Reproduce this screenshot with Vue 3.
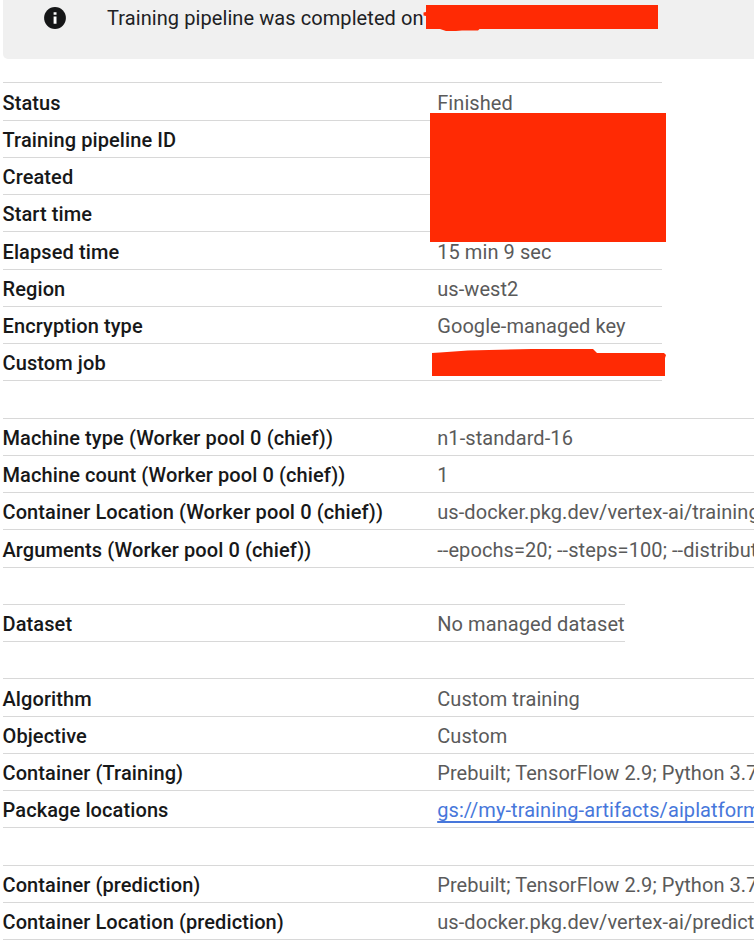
<script setup>
const groups = [
  {
    width: 'medium',
    rows: [
      { label: 'Status', value: 'Finished' },
      { label: 'Training pipeline ID', value: '', block: true },
      { label: 'Created', value: '' },
      { label: 'Start time', value: '' },
      { label: 'Elapsed time', value: '15 min 9 sec' },
      { label: 'Region', value: 'us-west2' },
      { label: 'Encryption type', value: 'Google-managed key' },
      { label: 'Custom job', value: '', strip: true },
    ],
  },
  {
    width: 'full',
    rows: [
      { label: 'Machine type (Worker pool 0 (chief))', value: 'n1-standard-16' },
      { label: 'Machine count (Worker pool 0 (chief))', value: '1' },
      { label: 'Container Location (Worker pool 0 (chief))', value: 'us-docker.pkg.dev/vertex-ai/training' },
      { label: 'Arguments (Worker pool 0 (chief))', value: '--epochs=20; --steps=100; --distribut' },
    ],
  },
  {
    width: 'narrow',
    rows: [{ label: 'Dataset', value: 'No managed dataset' }],
  },
  {
    width: 'full',
    rows: [
      { label: 'Algorithm', value: 'Custom training' },
      { label: 'Objective', value: 'Custom' },
      { label: 'Container (Training)', value: 'Prebuilt; TensorFlow 2.9; Python 3.7' },
      { label: 'Package locations', value: 'gs://my-training-artifacts/aiplatform', link: true },
    ],
  },
  {
    width: 'full',
    rows: [
      { label: 'Container (prediction)', value: 'Prebuilt; TensorFlow 2.9; Python 3.7' },
      { label: 'Container Location (prediction)', value: 'us-docker.pkg.dev/vertex-ai/predict' },
    ],
  },
]
</script>

<template>
  <main class="page">
    <header class="banner">
      <svg class="info" viewBox="0 0 22 22" aria-hidden="true">
        <circle cx="11" cy="11" r="10.9" fill="#151617" />
        <path d="M9.6 5.3h2.9v2.5H9.6zM9.6 9.5h2.9v7.3H9.6z" fill="#fff" />
      </svg>
      <span class="message">Training pipeline was completed on</span>
      <svg class="mask-banner" viewBox="0 0 236 27" aria-hidden="true">
        <path d="M4 0H236V24H57.500L56 25.500H40L34 26H24L18 24H4V11L1.500 10.500V7.500L4 7Z" />
      </svg>
    </header>

    <section v-for="(group, g) in groups" :key="g" class="group" :class="group.width">
      <div v-for="row in group.rows" :key="row.label" class="row">
        <span class="label">{{ row.label }}</span>
        <a v-if="row.link" class="value link">{{ row.value }}</a>
        <span v-else class="value">{{ row.value }}</span>
        <span v-if="row.block" class="mask-block"></span>
        <svg v-if="row.strip" class="mask-strip" viewBox="0 0 234 28" aria-hidden="true">
          <path d="M0 4L8 3.500L36 1.500L88 .3L100 0H161L165 4H232L234 6L233 9V27H0Z" />
        </svg>
      </div>
    </section>
  </main>
</template>

<style>
body {
  margin: 0;
  background: #fff;
}
</style>

<style scoped>
.page {
  box-sizing: border-box;
  width: 754px;
  height: 940px;
  padding-left: 2.5px;
  overflow: hidden;
  font-family: Roboto, sans-serif;
  font-size: 20px;
  letter-spacing: 0.08px;
  color: #5a5a5a;
}

.banner {
  position: relative;
  box-sizing: border-box;
  display: flex;
  align-items: flex-start;
  height: 59px;
  margin-bottom: 23.35px;
  padding: 7px 0 0 41.5px;
  border-bottom-left-radius: 5px;
  background: #f0f0f0;
}

.info {
  width: 22px;
  height: 22px;
}

.message {
  margin-left: 41px;
  line-height: 23px;
  white-space: nowrap;
  color: #202124;
}

.mask-banner {
  position: absolute;
  top: 5px;
  left: 419.5px;
  width: 236px;
  height: 27px;
  fill: #ff2a04;
}

.group {
  margin-bottom: 36.265px;
  border-bottom: 1px solid #d8d8d8;
}

.medium {
  width: 659px;
}

.narrow {
  width: 622.5px;
}

.row {
  position: relative;
  box-sizing: border-box;
  display: flex;
  height: 37.265px;
  padding-top: 1.2px;
  border-top: 1px solid #d8d8d8;
  line-height: 37px;
  white-space: nowrap;
}

.label {
  flex: 0 0 434.7px;
  font-weight: 500;
  letter-spacing: 0.1px;
  color: #171819;
}

.link {
  color: #4777db;
  text-decoration: underline;
  text-decoration-thickness: 2px;
  text-decoration-skip-ink: none;
  text-underline-offset: 4px;
}

.mask-block {
  position: absolute;
  z-index: 1;
  top: -7.6px;
  left: 427.5px;
  width: 236px;
  height: 129px;
  background: #ff2a04;
}

.mask-strip {
  position: absolute;
  top: 5px;
  left: 429.5px;
  width: 234px;
  height: 28px;
  fill: #ff2a04;
}
</style>
